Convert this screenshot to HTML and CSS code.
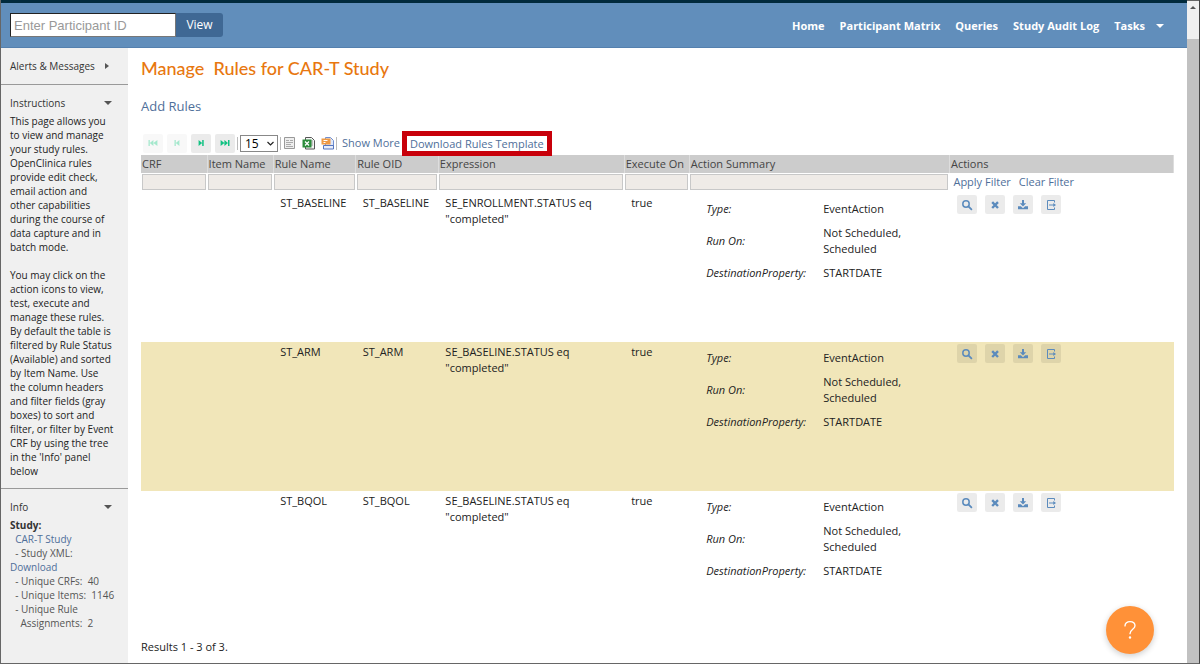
FILE: index.html
```html
<!DOCTYPE html>
<html lang="en">
<head>
<meta charset="utf-8">
<title>Manage Rules for CAR-T Study</title>
<link rel="stylesheet" href="styles.css">
</head>
<body>
<svg class="defs" aria-hidden="true">
  <symbol id="i-search" viewBox="0 0 12 12"><circle cx="5" cy="5" r="3.2" fill="none" stroke="currentColor" stroke-width="1.5"/><path d="M7.4 7.4 10.4 10.4" stroke="currentColor" stroke-width="1.8" stroke-linecap="round"/></symbol>
  <symbol id="i-remove" viewBox="0 0 12 12"><path d="M3.200 3.200 9 9M9 3.200 3.200 9" stroke="currentColor" stroke-width="2.400"/></symbol>
  <symbol id="i-download" viewBox="0 0 12 12"><path d="M5 1h2v3.200h2.200L6 7.400 2.800 4.200H5zM1 7.300h2.900L6 9.200l2.100-1.900h2.900V10.300H1z" fill="currentColor"/></symbol>
  <symbol id="i-export" viewBox="0 0 12 12"><path d="M9.500 3.500V1.500H2.500V10.500H9.500V8.500M4 6H9" fill="none" stroke="currentColor" stroke-width="1"/><path d="M8.300 4 11 6 8.300 8z" fill="currentColor"/></symbol>
  <symbol id="i-first" viewBox="0 0 12 12"><path d="M1.500 3h1.300v6H1.500zM6.400 3v6L2.800 6zM10.400 3v6L6.400 6z" fill="currentColor"/></symbol>
  <symbol id="i-prev" viewBox="0 0 12 12"><path d="M3.500 3h1.300v6H3.500zM8.400 3v6L4.800 6z" fill="currentColor"/></symbol>
  <symbol id="i-next" viewBox="0 0 12 12"><path d="M3.600 3v6L7.200 6zM7.200 3h1.500v6H7.200z" fill="currentColor"/></symbol>
  <symbol id="i-last" viewBox="0 0 12 12"><path d="M1.600 3v6L5.400 6zM5.400 3v6L9 6zM9 3h1.500v6H9z" fill="currentColor"/></symbol>
</svg>
<div class="frame">
  <div class="app">
    <header class="topbar">
      <form class="search">
        <input class="search-input" type="text" placeholder="Enter Participant ID" aria-label="Participant ID">
        <button class="search-button" type="button">View</button>
      </form>
      <nav class="nav">
        <a href="#">Home</a>
        <a href="#">Participant Matrix</a>
        <a href="#">Queries</a>
        <a href="#">Study Audit Log</a>
        <a href="#" class="tasks">Tasks <span class="caret caret-down"></span></a>
      </nav>
    </header>
    <div class="body">
      <aside class="sidebar">
        <section class="panel">
          <h2 class="panel-title">Alerts &amp; Messages <span class="caret caret-right"></span></h2>
        </section>
        <section class="panel">
          <h2 class="panel-title spread">Instructions <span class="caret caret-down"></span></h2>
          <p>This page allows you to view and manage your study rules. OpenClinica rules provide edit check, email action and<br>other capabilities<br>during the course of data capture and in batch mode.</p>
          <p>You may click on the action icons to view, test, execute and manage these rules. By default the table is filtered by Rule Status (Available) and sorted by Item Name. Use the column headers and filter fields (gray boxes) to sort and filter, or filter by Event CRF by using the tree in the 'Info' panel below</p>
        </section>
        <section class="panel info">
          <h2 class="panel-title spread">Info <span class="caret caret-down"></span></h2>
          <div class="facts">
            <b>Study:</b><br>
            &nbsp; <a href="#">CAR-T Study</a><br>
            &nbsp; - Study XML:<br>
            <a href="#">Download</a><br>
            &nbsp; - Unique CRFs: &nbsp;40<br>
            &nbsp; - Unique Items: &nbsp;1146<br>
            &nbsp; - Unique Rule<br>
            &nbsp; &nbsp; Assignments: &nbsp;2
          </div>
        </section>
      </aside>
      <main class="main">
        <h1 class="title">Manage&nbsp; Rules for CAR-T Study</h1>
        <a class="add" href="#">Add Rules</a>
        <div class="toolbar">
          <div class="pager">
            <button class="page-button" type="button" aria-label="First page" disabled><svg class="icon"><use href="#i-first"/></svg></button>
            <button class="page-button" type="button" aria-label="Previous page" disabled><svg class="icon"><use href="#i-prev"/></svg></button>
            <button class="page-button" type="button" aria-label="Next page"><svg class="icon"><use href="#i-next"/></svg></button>
            <button class="page-button" type="button" aria-label="Last page"><svg class="icon"><use href="#i-last"/></svg></button>
          </div>
          <span class="bar"></span>
          <span class="select-box">
            <select class="page-size" aria-label="Rows per page"><option>15</option><option>25</option><option>50</option></select>
            <svg class="chevron" viewBox="0 0 9 9"><path d="M1.500 3 4.500 6 7.500 3" fill="none" stroke="#222" stroke-width="1.200"/></svg>
          </span>
          <span class="bar"></span>
          <div class="exports">
            <svg class="export-icon" viewBox="0 0 13 14"><path d="M1.500 1.500h10v11h-10z" fill="#eee" stroke="#999"/><path d="M3 4.500h3M3 6.500h7M3 8.500h5M3 10.500h7M7 4.500h3" stroke="#aaa"/></svg>
            <svg class="export-icon" viewBox="0 0 13 14"><path d="M3.500 1.500H9.500l3 3v8.500H3.500z" fill="#f5f5f5" stroke="#555"/><path d="M7 5h4M8 7h3M8 9h3" stroke="#999"/><path d="M.5 3.500h9v8h-9z" fill="#2c8c3c"/><path d="M3 5.500l4 4M7 5.500L3 9.500" stroke="#fff" stroke-width="1.300"/></svg>
            <svg class="export-icon" viewBox="0 0 13 14"><path d="M4.500 1.500H9.500l3 3v7H4.500z" fill="#dfe8fa" stroke="#6f8ed0"/><path d="M.5 2.500h9v6h-9z" fill="#ef9a45"/><path d="M2.500 4.500h4M2.500 6.500h2" stroke="#fff"/><path d="M2.500 9.500h10v3.500h-10z" fill="#e8eefb" stroke="#5575bf"/></svg>
          </div>
          <span class="bar"></span>
          <a class="more" href="#">Show More</a>
          <a class="template" href="#">Download Rules Template</a>
        </div>
        <table class="rules">
          <colgroup><col class="c-crf"><col class="c-item"><col class="c-name"><col class="c-oid"><col class="c-expr"><col class="c-exec"><col class="c-summary"><col class="c-actions"></colgroup>
          <thead>
            <tr class="heads"><th>CRF</th><th>Item Name</th><th>Rule Name</th><th>Rule OID</th><th>Expression</th><th>Execute On</th><th>Action Summary</th><th>Actions</th></tr>
            <tr class="filters">
              <td><input type="text" aria-label="Filter CRF"></td>
              <td><input type="text" aria-label="Filter Item Name"></td>
              <td><input type="text" aria-label="Filter Rule Name"></td>
              <td><input type="text" aria-label="Filter Rule OID"></td>
              <td><input type="text" aria-label="Filter Expression"></td>
              <td><input type="text" aria-label="Filter Execute On"></td>
              <td><input type="text" aria-label="Filter Action Summary"></td>
              <td><div class="filter-links"><a href="#">Apply Filter</a><a href="#">Clear Filter</a></div></td>
            </tr>
          </thead>
          <tbody>
            <tr>
              <td></td><td></td><td>ST_BASELINE</td><td>ST_BASELINE</td><td>SE_ENROLLMENT.STATUS eq<br>"completed"</td><td>true</td>
              <td><dl class="summary"><dt>Type:</dt><dd>EventAction</dd><dt>Run On:</dt><dd>Not Scheduled, Scheduled</dd><dt>DestinationProperty:</dt><dd>STARTDATE</dd></dl></td>
              <td><div class="actions"><button type="button" aria-label="View"><svg class="icon"><use href="#i-search"/></svg></button><button type="button" aria-label="Remove"><svg class="icon"><use href="#i-remove"/></svg></button><button type="button" aria-label="Download"><svg class="icon"><use href="#i-download"/></svg></button><button type="button" aria-label="Test"><svg class="icon"><use href="#i-export"/></svg></button></div></td>
            </tr>
            <tr>
              <td></td><td></td><td>ST_ARM</td><td>ST_ARM</td><td>SE_BASELINE.STATUS eq<br>"completed"</td><td>true</td>
              <td><dl class="summary"><dt>Type:</dt><dd>EventAction</dd><dt>Run On:</dt><dd>Not Scheduled, Scheduled</dd><dt>DestinationProperty:</dt><dd>STARTDATE</dd></dl></td>
              <td><div class="actions"><button type="button" aria-label="View"><svg class="icon"><use href="#i-search"/></svg></button><button type="button" aria-label="Remove"><svg class="icon"><use href="#i-remove"/></svg></button><button type="button" aria-label="Download"><svg class="icon"><use href="#i-download"/></svg></button><button type="button" aria-label="Test"><svg class="icon"><use href="#i-export"/></svg></button></div></td>
            </tr>
            <tr>
              <td></td><td></td><td>ST_BQOL</td><td>ST_BQOL</td><td>SE_BASELINE.STATUS eq<br>"completed"</td><td>true</td>
              <td><dl class="summary"><dt>Type:</dt><dd>EventAction</dd><dt>Run On:</dt><dd>Not Scheduled, Scheduled</dd><dt>DestinationProperty:</dt><dd>STARTDATE</dd></dl></td>
              <td><div class="actions"><button type="button" aria-label="View"><svg class="icon"><use href="#i-search"/></svg></button><button type="button" aria-label="Remove"><svg class="icon"><use href="#i-remove"/></svg></button><button type="button" aria-label="Download"><svg class="icon"><use href="#i-download"/></svg></button><button type="button" aria-label="Test"><svg class="icon"><use href="#i-export"/></svg></button></div></td>
            </tr>
          </tbody>
        </table>
        <p class="results">Results 1 - 3 of 3.</p>
      </main>
    </div>
  </div>
  <div class="scrollbar"><span class="scroll-up"><span class="caret caret-up"></span></span><span class="scroll-thumb"></span></div>
</div>
<button class="help" type="button" aria-label="Help"><svg class="help-icon" viewBox="0 0 16 22"><path d="M2.500 6.500C2.500 3.500 4.800 1.800 8 1.800s5.500 1.800 5.500 4.600C13.500 10.200 8 10.300 8 15" fill="none" stroke="#fff" stroke-width="1.500" stroke-linecap="round"/><circle cx="8" cy="19.300" r="1.300" fill="#fff"/></svg></button>
</body>
</html>
```
FILE: styles.css
```css
* { box-sizing: border-box; }

body {
  margin: 0;
  background: #fff;
  color: #222;
  font: 11px/14px "Open Sans", sans-serif;
}

a { color: #4f6f9a; text-decoration: none; }
button { border: 0; padding: 0; font: inherit; }
p, h1, h2, dl, dd { margin: 0; }

.defs { position: absolute; width: 0; height: 0; }
.icon { display: block; width: 12px; height: 12px; }

.frame {
  display: flex;
  min-height: 100vh;
  border-left: 1px solid #666;
  border-right: 1px solid #444;
  border-bottom: 1px solid #666;
}
.app { flex: 1; display: flex; flex-direction: column; min-width: 0; }

.topbar {
  display: flex;
  align-items: center;
  justify-content: space-between;
  height: 48px;
  padding: 0 23px 0 9px;
  background: #618ebb;
  border-top: 3px solid #012a3c;
  border-bottom: 1px solid #5480ae;
}
.search { display: flex; align-items: center; }
.search-input {
  width: 166px;
  height: 24px;
  padding: 0 3px;
  border: 1px solid #777;
  border-top-color: #222;
  border-left-color: #222;
  background: #fff;
  font: 13px "Liberation Sans", sans-serif;
}
.search-input::placeholder { color: #999; }
.search-button {
  width: 47px;
  height: 24px;
  border-radius: 0 3px 3px 0;
  background: #3f6894;
  color: #fff;
  font-size: 12px;
}
.nav { display: flex; gap: 15px; padding-top: 2px; }
.nav a { color: #fff; font-weight: 700; }
.tasks { display: flex; align-items: center; gap: 11px; }

.caret { display: inline-block; flex: none; border: 3px solid transparent; }
.caret-down { border-width: 4px 4px 0; border-top-color: currentColor; }
.caret-up { border-width: 0 3px 3px; border-bottom-color: #555; }
.caret-right { border-width: 3px 0 3px 4px; border-left-color: currentColor; }

.body { flex: 1; display: flex; }
.sidebar { flex: none; width: 127px; background: #f0f0f0; font-size: 10px; }
.panel { padding: 10px 12px 10px 9px; border-bottom: 1px solid #999; }
.panel:last-child { border-bottom: 0; }
.panel p + p { margin-top: 14px; }
.panel-title {
  display: flex;
  align-items: center;
  gap: 10px;
  padding-right: 4px;
  color: #333;
  font-size: 10px;
  font-weight: 400;
  line-height: 16px;
  white-space: nowrap;
}
.panel-title.spread { justify-content: space-between; margin-bottom: 3px; }
.panel-title .caret { color: #555; }
.facts { color: #555; white-space: nowrap; }
.facts b { color: #333; }

.main { flex: 1; min-width: 0; padding: 8px 13px 0; }
.title {
  color: #e8770f;
  font: 500 18px/24px Lato, sans-serif;
}
.add { display: block; margin-top: 17px; font-size: 13px; line-height: 18px; }

.toolbar { display: flex; align-items: center; height: 24px; margin-top: 16px; }
.pager { display: flex; gap: 4px; padding-left: 2px; }
.page-button {
  display: grid;
  place-items: center;
  width: 20px;
  height: 19px;
  border-radius: 2px;
  background: #ebebeb;
  color: #12c283;
}
.page-button:disabled { background: #f8f8f8; color: #a5e8cd; }
.bar { width: 1px; height: 13px; margin: 0 2px; background: #bbb; }
.select-box { position: relative; display: flex; }
.page-size {
  appearance: none;
  width: 38px;
  height: 17px;
  padding: 0 4px;
  border: 1px solid #888;
  border-radius: 0;
  background: #fff;
  color: #000;
  font: 12px/15px "Open Sans", sans-serif;
}
.chevron { position: absolute; top: 4px; right: 3px; width: 9px; height: 9px; pointer-events: none; }
.exports { display: flex; gap: 6px; }
.export-icon { width: 13px; height: 14px; }
.more { margin-left: 3px; }
.template { margin-left: 2px; padding: 0 3px; border: 5px solid #c8000a; line-height: 15px; background: #fff; }

.rules { width: 100%; table-layout: fixed; border-collapse: collapse; }
.c-crf, .c-item { width: 6.4%; }
.c-name, .c-oid { width: 8%; }
.c-expr { width: 18%; }
.c-exec { width: 6.3%; }
.c-summary { width: 25.2%; }
.rules th {
  height: 18px;
  padding: 0 1px;
  background: #ccc;
  border-right: 1px solid #ddd;
  color: #444;
  font-weight: 400;
  text-align: left;
  white-space: nowrap;
}
.filters td { height: 20px; padding: 1px 1px 3px; }
.filters input {
  display: block;
  width: 100%;
  height: 16px;
  border: 1px solid #c8c8c8;
  background: #efebe7;
}
.filter-links { display: flex; gap: 8px; padding-left: 3px; }
.rules tbody td {
  height: 149px;
  padding: 2px 7px;
  line-height: 16px;
  vertical-align: top;
}
.rules tbody tr:nth-child(even) { background: #f1e6b9; }
.summary {
  display: grid;
  grid-template-columns: 117px 90px;
  align-items: center;
  gap: 8px 0;
  padding: 6px 0 0 10px;
}
.summary dt { font-style: italic; }
.actions { display: flex; gap: 8px; padding-left: 1px; }
.actions button {
  display: grid;
  place-items: center;
  width: 20px;
  height: 19px;
  border-radius: 2px;
  background: rgba(0, 0, 0, .08);
  color: #5b8bbd;
}
.results { margin-top: 0; }

.scrollbar { flex: none; display: flex; flex-direction: column; width: 12px; background: #f0f0f0; border-top: 1px solid #666; }
.scroll-up { display: flex; align-items: center; justify-content: center; height: 12px; }
.scroll-thumb { flex: 1; margin-top: 26px; background: #c1c1c1; }

.help {
  position: fixed;
  right: 46px;
  bottom: 10px;
  display: grid;
  place-items: center;
  width: 48px;
  height: 48px;
  border-radius: 50%;
  background: #ff9138;
  box-shadow: 0 2px 6px rgba(0, 0, 0, .2);
}
.help-icon { width: 16px; height: 20px; }
```
